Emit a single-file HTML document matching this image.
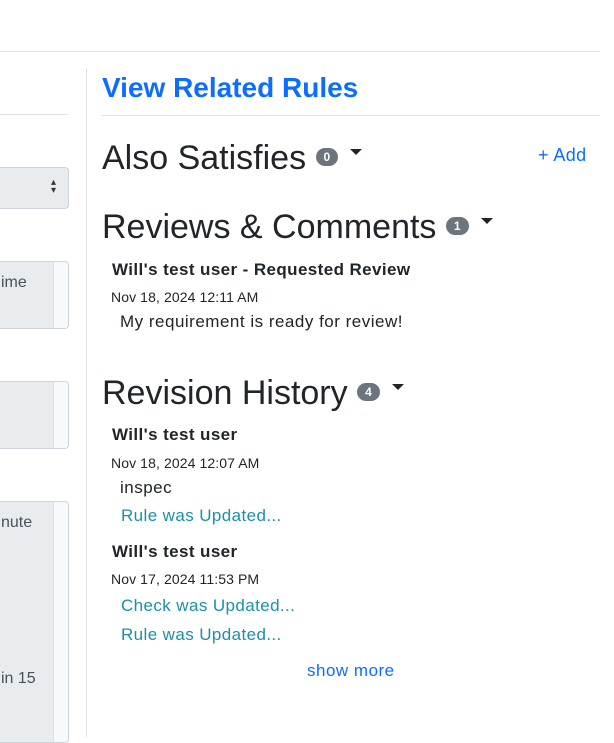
<!DOCTYPE html>
<html><head><style>
body{margin:0;width:614px;height:737px;position:relative;overflow:hidden;background:#fff;font-family:"Liberation Sans",Arial,sans-serif;color:#212529}
.a{position:absolute;white-space:nowrap}
.badge{display:inline-block;background:#6c757d;color:#fff;font-size:12px;font-weight:bold;border-radius:9px;padding:0 8px;height:18px;line-height:18px;vertical-align:middle;position:relative;top:-3px;letter-spacing:0}
.caret{display:inline-block;width:0;height:0;border-left:6px solid transparent;border-right:6px solid transparent;border-top:6px solid #212529;vertical-align:middle;margin-left:12px;position:relative;top:-8px}
h2{margin:0;font-weight:normal;font-size:34px;letter-spacing:0}
.u{font-weight:bold;font-size:17px;letter-spacing:0.4px}
.d{font-size:14px;letter-spacing:0.1px}
.t{font-size:17px;letter-spacing:0.5px}
.l{font-size:17px;color:#1a91a6;letter-spacing:0.4px}
.box{position:absolute;left:-5px;width:72px;border:1px solid #ced4da;border-radius:4px;background:#e9ecef;overflow:hidden;font-size:16px;color:#495057}
.box .s{position:absolute;right:0;top:0;bottom:0;width:14px;background:#f8f9fa;border-left:1px solid #dee2e6}
</style></head><body>
<div class="a" style="left:0;top:51px;width:600px;height:1px;background:#dee2e6"></div>
<div class="a" style="left:0;top:114px;width:68px;height:1px;background:#dee2e6"></div>
<div class="a" style="left:86px;top:68px;width:1px;height:669px;background:#dee2e6"></div>
<div class="box" style="top:167px;height:40px;"><span style="position:absolute;right:12px;top:11px;font-size:10px;color:#333;line-height:8px">▴<br>▾</span></div>
<div class="box" style="top:261px;height:66px;"><div class="s"></div><span style="position:absolute;left:5px;top:12px">ime</span></div>
<div class="box" style="top:381px;height:66px;"><div class="s"></div></div>
<div class="box" style="top:501px;height:240px;"><div class="s"></div><span style="position:absolute;left:5px;top:12px">nute</span><span style="position:absolute;left:5px;top:168px">in 15</span></div>

<div class="a" style="left:102px;top:72px;font-size:28px;font-weight:bold;color:#0d6efd;letter-spacing:0">View Related Rules</div>
<div class="a" style="left:102px;top:115px;width:498px;height:1px;background:#dee2e6"></div>
<div class="a" style="left:102px;top:139px"><h2>Also Satisfies <span class="badge">0</span><span class="caret"></span></h2></div>
<div class="a" style="left:538px;top:145px;font-size:18px;color:#0d6efd;letter-spacing:0.4px">+ Add</div>
<div class="a" style="left:102px;top:208px"><h2>Reviews &amp; Comments <span class="badge">1</span><span class="caret"></span></h2></div>
<div class="a u" style="left:112px;top:260px">Will's test user - Requested Review</div>
<div class="a d" style="left:111px;top:289px">Nov 18, 2024 12:11 AM</div>
<div class="a t" style="left:120px;top:312px">My requirement is ready for review!</div>
<div class="a" style="left:102px;top:374px"><h2>Revision History <span class="badge">4</span><span class="caret"></span></h2></div>
<div class="a u" style="left:112px;top:425px">Will's test user</div>
<div class="a d" style="left:111px;top:455px">Nov 18, 2024 12:07 AM</div>
<div class="a t" style="left:120px;top:478px">inspec</div>
<div class="a l" style="left:121px;top:506px">Rule was Updated...</div>
<div class="a u" style="left:112px;top:542px">Will's test user</div>
<div class="a d" style="left:111px;top:571px">Nov 17, 2024 11:53 PM</div>
<div class="a l" style="left:121px;top:596px">Check was Updated...</div>
<div class="a l" style="left:121px;top:625px">Rule was Updated...</div>
<div class="a" style="left:307px;top:661px;font-size:17px;color:#0d6efd;letter-spacing:0.5px">show more</div>
</body></html>
